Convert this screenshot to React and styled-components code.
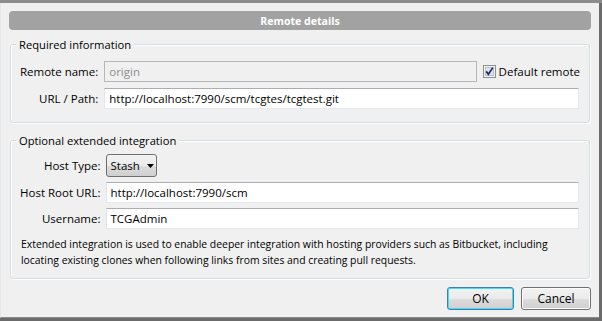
import React from 'react'
import styled, { createGlobalStyle } from 'styled-components'

const Global = createGlobalStyle`
  html, body {
    margin: 0;
    padding: 0;
    background: #6b6b6b;
  }
  body {
    font-family: "Open Sans", "Noto Sans", sans-serif;
    font-size: 11.5px;
    color: #000;
  }
`;

const Screen = styled.div`
  width: 602px;
  height: 321px;
  display: flex;
  flex-direction: column;
  background: #6b6b6b;
  overflow: hidden;
`;

const TopStrip = styled.div`
  height: 3px;
  background: #8c8c8c;
  flex-shrink: 0;
`;

const Middle = styled.div`
  display: flex;
  flex: 1;
`;

const Dialog = styled.div`
  width: 599px;
  height: 315px;
  box-sizing: border-box;
  background: #f0f0f0;
  border-left: 1px solid #e6e6e6;
  border-bottom: 1px solid #8a8a8a;
  padding: 8px 8px 0 8px;
  display: flex;
  flex-direction: column;
`;

const TitleBar = styled.div`
  height: 19px;
  flex-shrink: 0;
  border-radius: 4px;
  background: #a2a2a2;
  color: #fff;
  font-weight: 700;
  font-size: 10.6px;
  display: flex;
  align-items: center;
  justify-content: center;
`;

const Group = styled.fieldset`
  margin: ${p => p.$top}px 1px 0 1px;
  padding: ${p => p.$padTop}px 10px ${p => p.$padBottom}px 9px;
  border: 1px solid #d3dde4;
  border-radius: 3px;
  box-shadow: inset 1px 1px 0 #fff, 1px 1px 0 #fff;
  min-width: 0;
`;

const Legend = styled.legend`
  padding: 0 3px;
  margin-left: -4px;
  background: #f0f0f0;
  line-height: 15px;
  font-size: 11.2px;
`;

const Form = styled.div`
  display: grid;
  grid-template-columns: auto 1fr auto;
  column-gap: ${p => p.$gap}px;
  row-gap: ${p => p.$rowGap}px;
  align-items: center;
`;

const Label = styled.label`
  text-align: right;
  white-space: nowrap;
`;

const Input = styled.div`
  height: 21px;
  box-sizing: border-box;
  border: 1px solid #e3e9ef;
  border-top-color: #abadb3;
  border-left-color: #e2e3ea;
  background: ${p => (p.$disabled ? '#f0f0f0' : '#fff')};
  color: ${p => (p.$disabled ? '#8d8d8d' : '#000')};
  border-color: ${p => (p.$disabled ? '#b5b8bb' : undefined)};
  padding: 0 4px;
  display: flex;
  align-items: center;
  grid-column: ${p => (p.$span ? 'span 2' : 'auto')};
  white-space: nowrap;
`;

const CheckRow = styled.label`
  display: flex;
  align-items: center;
  gap: 3px;
  white-space: nowrap;
  margin-right: -1px;
`;

const Select = styled.div`
  justify-self: start;
  height: 23px;
  width: 51px;
  box-sizing: border-box;
  border: 1px solid #707070;
  border-radius: 3px;
  background: linear-gradient(#f2f2f2 0%, #ebebeb 50%, #dddddd 51%, #cfcfcf 100%);
  display: flex;
  align-items: center;
  padding: 0 0 0 4px;
  gap: 7px;
`;

const Note = styled.p`
  margin: 7px 0 0 1px;
  line-height: 16px;
  font-size: 10.4px;
  white-space: nowrap;
`;

const Footer = styled.div`
  display: flex;
  justify-content: flex-end;
  gap: 7px;
  margin-top: 8px;
`;

const Button = styled.button`
  font: inherit;
  font-size: 12px;
  width: ${p => p.$w}px;
  height: 23px;
  border-radius: 3px;
  border: 1px solid ${p => (p.$focus ? '#3c7fb1' : '#707070')};
  background: linear-gradient(#f2f2f2 0%, #ebebeb 50%, #dddddd 51%, #cfcfcf 100%);
  box-shadow: inset 0 0 0 1px ${p => (p.$focus ? '#48d8fb' : '#fcfcfc')};
  color: #000;
  padding: 0;
`;

const CheckBox = () => (
  <svg width="13" height="13" viewBox="0 0 13 13">
    <rect x="0.5" y="0.5" width="12" height="12" fill="#f4f4f4" stroke="#8e8f8f" />
    <rect x="2.5" y="2.5" width="8" height="8" fill="#e2e4e8" stroke="#b9bec6" />
    <path d="M3.2 6.4 L5.4 9.2 L9.8 2.6" fill="none" stroke="#1c2a6e" strokeWidth="1.7" />
  </svg>
);

const Caret = () => (
  <svg width="7" height="4" viewBox="0 0 7 4">
    <path d="M0 0 H7 L3.5 4 Z" fill="#000" />
  </svg>
);

export default function App() {
  return (
    <>
      <Global />
      <Screen>
        <TopStrip />
        <Middle>
          <Dialog>
            <TitleBar>Remote details</TitleBar>

            <Group $top={7} $padTop={9} $padBottom={13}>
              <Legend>Required information</Legend>
              <Form $gap={6} $rowGap={6}>
                <Label>Remote name:</Label>
                <Input $disabled>origin</Input>
                <CheckRow>
                  <CheckBox />
                  Default remote
                </CheckRow>
                <Label>URL / Path:</Label>
                <Input $span>http://localhost:7990/scm/tcgtes/tcgtest.git</Input>
              </Form>
            </Group>

            <Group $top={10} $padTop={6} $padBottom={10}>
              <Legend>Optional extended integration</Legend>
              <Form $gap={5} $rowGap={5}>
                <Label>Host Type:</Label>
                <Select>
                  Stash <Caret />
                </Select>
                <span />
                <Label>Host Root URL:</Label>
                <Input $span>http://localhost:7990/scm</Input>
                <Label>Username:</Label>
                <Input $span>TCGAdmin</Input>
              </Form>
              <Note>
                Extended integration is used to enable deeper integration with hosting providers such as Bitbucket, including
                <br />
                locating existing clones when following links from sites and creating pull requests.
              </Note>
            </Group>

            <Footer>
              <Button $w={67} $focus>OK</Button>
              <Button $w={70}>Cancel</Button>
            </Footer>
          </Dialog>
        </Middle>
      </Screen>
    </>
  )
}
